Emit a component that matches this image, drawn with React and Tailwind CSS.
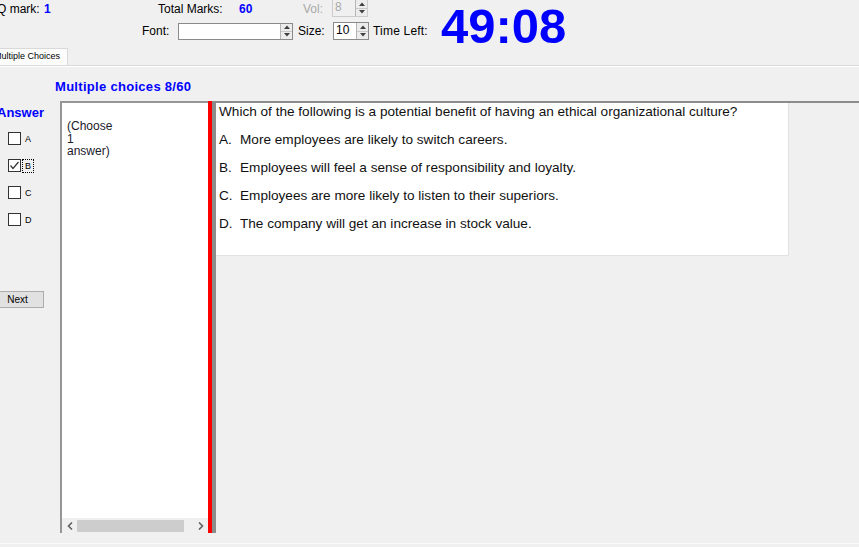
import React from "react";

function Arrows() {
  return (
    <div className="w-[12px] h-full flex flex-col border-l border-[#b5b5b5] bg-[#ececec] shrink-0">
      <div className="flex-1 flex items-center justify-center border-b border-[#c8c8c8]">
        <svg width="6" height="4" viewBox="0 0 6 4"><polygon points="0,4 3,0.5 6,4" fill="#404040" /></svg>
      </div>
      <div className="flex-1 flex items-center justify-center">
        <svg width="6" height="4" viewBox="0 0 6 4"><polygon points="0,0 3,3.5 6,0" fill="#404040" /></svg>
      </div>
    </div>
  );
}

function Spin({ value, cls, disabled }) {
  return (
    <div className={cls}>
      <div className={disabled ? "flex-1 pl-[2px] text-[#a8a8a8] leading-[15px]" : "flex-1 pl-[2px] leading-[15px]"}>{value}</div>
      <Arrows />
    </div>
  );
}

function Check({ label, checked, focused }) {
  return (
    <div className="h-[13px] flex items-center pl-[8px]">
      <div className="w-[13px] h-[13px] border border-[#333333] bg-white shrink-0 flex items-center justify-center">
        {checked && (
          <svg width="11" height="11" viewBox="0 0 11 11">
            <polyline points="1.5,5.5 4,8.5 9.5,2" fill="none" stroke="#333333" strokeWidth="1.2" />
          </svg>
        )}
      </div>
      <span
        className={
          focused
            ? "ml-[1px] px-[2px] border border-dotted border-black text-[9px] leading-[12px]"
            : "ml-[1px] px-[2px] border border-transparent text-[9px] leading-[12px]"
        }
      >
        {label}
      </span>
    </div>
  );
}

export default function App() {
  const options = [
    ["A.", "More employees are likely to switch careers."],
    ["B.", "Employees will feel a sense of responsibility and loyalty."],
    ["C.", "Employees are more likely to listen to their superiors."],
    ["D.", "The company will get an increase in stock value."],
  ];
  return (
    <div className="w-[859px] h-[547px] bg-[#f0f0f0] overflow-hidden flex flex-col text-black font-['Liberation_Sans',Arial,sans-serif]">
      {/* header */}
      <div className="h-[48px] flex shrink-0">
        <div className="w-[441px] shrink-0 flex flex-col">
          <div className="h-[17px] flex items-center text-[12px]">
            <span className="-ml-[3px] w-[47px] shrink-0 whitespace-nowrap">Q mark:</span>
            <span className="w-[114px] shrink-0 font-bold text-[#0000ff]">1</span>
            <span className="w-[81px] shrink-0 whitespace-nowrap">Total Marks:</span>
            <span className="w-[64px] shrink-0 font-bold text-[#0000ff]">60</span>
            <span className="w-[29px] shrink-0 text-[#a8a8a8]">Vol:</span>
            <Spin
              value="8"
              disabled
              cls="w-[36px] h-[18px] -mt-[1px] flex border border-[#cccccc] bg-[#f0f0f0] text-[12px]"
            />
          </div>
          <div className="mt-[5px] h-[18px] flex items-center text-[12px]">
            <span className="ml-[142px] w-[36px] shrink-0">Font:</span>
            <Spin value="" cls="w-[115px] h-[17px] flex border border-[#8a8a8a] bg-white shrink-0" />
            <span className="ml-[5px] w-[35px] shrink-0">Size:</span>
            <Spin value="10" cls="w-[36px] h-[18px] flex border border-[#8a8a8a] bg-white shrink-0 text-[12px]" />
            <span className="ml-[4px] whitespace-nowrap tracking-[0.2px]">Time Left:</span>
          </div>
        </div>
        <div className="text-[49px] font-bold text-[#0000ff] leading-none mt-[2px]">49:08</div>
      </div>

      {/* tab row */}
      <div className="h-[17px] flex shrink-0">
        <div className="w-[68px] h-full bg-[#fcfcfc] border-r border-t border-[#d9d9d9] flex items-center justify-end pr-[7px] overflow-hidden whitespace-nowrap text-[9px]">
          Multiple Choices
        </div>
      </div>
      <div className="h-[1px] bg-[#dadada] shrink-0" />
      <div className="h-[1px] bg-white shrink-0" />

      {/* heading */}
      <div className="h-[34px] shrink-0 pl-[55px] pt-[12px]">
        <div className="text-[13px] leading-[15px] font-bold text-[#0000ff] tracking-[0.3px]">Multiple choices 8/60</div>
      </div>

      {/* main */}
      <div className="h-[432px] flex shrink-0">
        <div className="w-[60px] shrink-0 flex flex-col">
          <div className="-ml-[3px] mt-[5px] leading-[14px] text-[13px] font-bold text-[#0000ff]">Answer</div>
          <div className="mt-[12px] flex flex-col gap-[14px]">
            <Check label="A" />
            <Check label="B" checked focused />
            <Check label="C" />
            <Check label="D" />
          </div>
          <div className="mt-[65px] -ml-[9px] w-[53px] h-[17px] bg-[#e1e1e1] border border-[#adadad] flex items-center justify-center text-[10px]">
            Next
          </div>
        </div>

        <div className="w-[148px] shrink-0 bg-white border-l-2 border-t-2 border-[#969696] flex flex-col">
          <div className="pl-[5px] pt-[17px] text-[12px] leading-[12.5px] text-[#1a1a2a]">
            <div>(Choose</div>
            <div>1</div>
            <div>answer)</div>
          </div>
          <div className="flex-1" />
          <div className="h-[15px] bg-[#f0f0f0] flex items-center">
            <div className="w-[15px] h-full flex items-center justify-center">
              <svg width="6" height="8" viewBox="0 0 6 8"><polyline points="5,0.5 1.5,4 5,7.5" fill="none" stroke="#606060" strokeWidth="1.6" /></svg>
            </div>
            <div className="w-[107px] h-[12px] bg-[#cdcdcd]" />
            <div className="flex-1" />
            <div className="w-[15px] h-full flex items-center justify-center">
              <svg width="6" height="8" viewBox="0 0 6 8"><polyline points="1,0.5 4.5,4 1,7.5" fill="none" stroke="#606060" strokeWidth="1.6" /></svg>
            </div>
          </div>
        </div>

        <div className="w-[4px] shrink-0 bg-[#ff0000]" />

        <div className="flex-1 border-l-[4px] border-t-2 border-[#8c8c8c] flex items-start">
          <div className="w-[573px] h-[153px] bg-white border-r border-b border-[#e2e2e2] pl-[3px] pt-[1px] flex flex-col gap-[12px] text-[13.6px] leading-[16px] text-[#111111]">
            <div className="whitespace-nowrap">Which of the following is a potential benefit of having an ethical organizational culture?</div>
            {options.map(([k, t]) => (
              <div key={k} className="flex whitespace-nowrap">
                <span className="w-[21px] shrink-0">{k}</span>
                <span>{t}</span>
              </div>
            ))}
          </div>
        </div>
      </div>

      <div className="h-[10px] shrink-0" />
      <div className="h-[1px] bg-[#fafafa] shrink-0" />
    </div>
  );
}
